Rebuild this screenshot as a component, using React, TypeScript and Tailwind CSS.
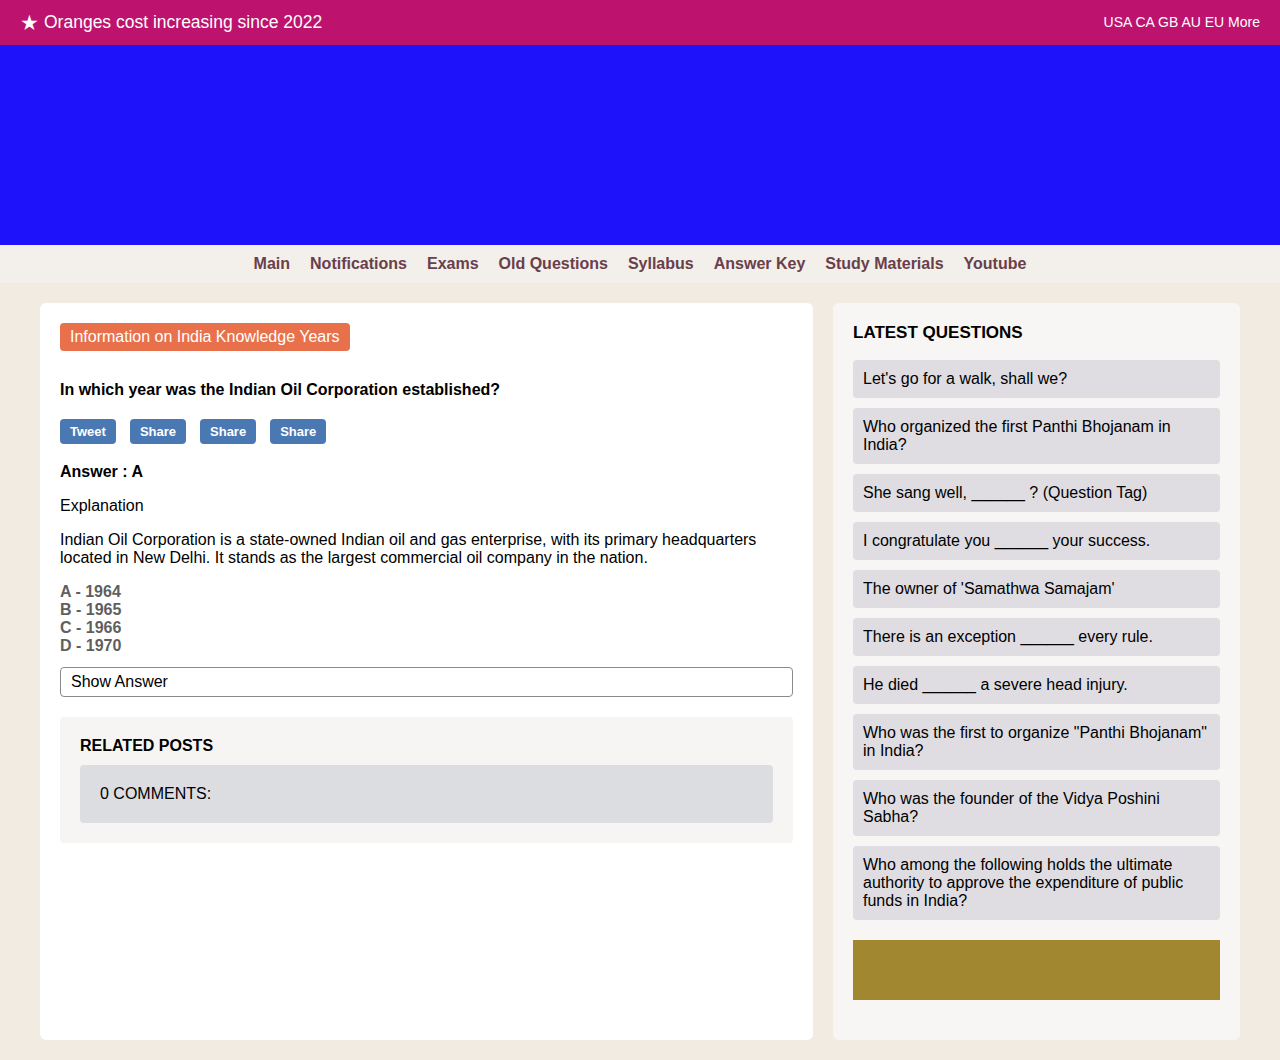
import React from 'react'

const navItems = ['Main', 'Notifications', 'Exams', 'Old Questions', 'Syllabus', 'Answer Key', 'Study Materials', 'Youtube']

const latest = [
  "Let's go for a walk, shall we?",
  'Who organized the first Panthi Bhojanam in India?',
  'She sang well, ______ ? (Question Tag)',
  'I congratulate you ______ your success.',
  "The owner of 'Samathwa Samajam'",
  'There is an exception ______ every rule.',
  'He died ______ a severe head injury.',
  'Who was the first to organize "Panthi Bhojanam" in India?',
  'Who was the founder of the Vidya Poshini Sabha?',
  'Who among the following holds the ultimate authority to approve the expenditure of public funds in India?',
]

const options = ['A - 1964', 'B - 1965', 'C - 1966', 'D - 1970']

export default function App() {
  return (
    <div className="min-h-[1060px] bg-[#f2ebe2] font-[family-name:Liberation_Sans,Arial,sans-serif] text-black">
      {/* Top bar */}
      <div className="h-[45px] bg-[#bd126d] flex items-center justify-between px-5 text-white">
        <div className="flex items-center gap-[5px] text-[17.5px]">
          <span className="text-[21px] leading-none">★</span>
          <span>Oranges cost increasing since 2022</span>
        </div>
        <div className="text-[14px]">USA CA GB AU EU More</div>
      </div>

      {/* Banner */}
      <div className="h-[200px] bg-[#1e12fb]" />

      {/* Nav */}
      <nav className="h-[38px] bg-[#f3efeb] flex items-center justify-center gap-5">
        {navItems.map(item => (
          <a key={item} className="text-[16px] font-bold text-[#69404a]">{item}</a>
        ))}
      </nav>

      <div className="px-10 pt-5 pb-5 grid grid-cols-[773px_407px] gap-5">
        {/* Main card */}
        <div className="bg-white rounded-md p-5">
          <span className="inline-block bg-[#e8714b] text-white text-[16px] leading-[18px] px-[10px] py-[5px] rounded">
            Information on India Knowledge Years
          </span>
          <h2 className="mt-[30px] text-[16px] font-bold leading-[18px]">
            In which year was the Indian Oil Corporation established?
          </h2>
          <div className="mt-[20px] flex gap-[14px]">
            {['Tweet', 'Share', 'Share', 'Share'].map((b, i) => (
              <button key={i} className="bg-[#4a78b3] text-white text-[13px] font-bold h-[25px] px-[10px] rounded">
                {b}
              </button>
            ))}
          </div>
          <div className="mt-[19px] text-[16px] font-bold leading-[18px]">Answer : A</div>
          <div className="mt-[16px] text-[16px] leading-[18px]">Explanation</div>
          <p className="mt-[16px] text-[16px] leading-[18px]">
            Indian Oil Corporation is a state-owned Indian oil and gas enterprise, with its primary headquarters
            located in New Delhi. It stands as the largest commercial oil company in the nation.
          </p>
          <div className="mt-[16px] text-[16px] leading-[18px] font-bold text-[#5f5f5f]">
            {options.map(o => (
              <div key={o}>{o}</div>
            ))}
          </div>
          <div className="mt-[12px] h-[30px] border border-[#8a8a8a] rounded px-[10px] flex items-center text-[16px]">
            Show Answer
          </div>

          <div className="mt-[20px] bg-[#f6f5f3] rounded p-5">
            <h3 className="text-[16px] font-bold leading-[18px]">RELATED POSTS</h3>
            <div className="mt-[10px] bg-[#dcdde0] rounded h-[58px] px-5 flex items-center text-[16px]">
              0 COMMENTS:
            </div>
          </div>
        </div>

        {/* Sidebar */}
        <aside className="bg-[#f7f6f4] rounded-md p-5 pb-10">
          <h3 className="text-[17px] font-bold leading-[20px]">LATEST QUESTIONS</h3>
          <div className="mt-[17px] flex flex-col gap-[10px]">
            {latest.map((q, i) => (
              <div key={i} className="bg-[#dfdde1] rounded px-[10px] py-[10px] text-[16px] leading-[18px]">
                {q}
              </div>
            ))}
          </div>
          <div className="mt-5 h-[60px] bg-[#a18830]" />
        </aside>
      </div>
    </div>
  )
}
